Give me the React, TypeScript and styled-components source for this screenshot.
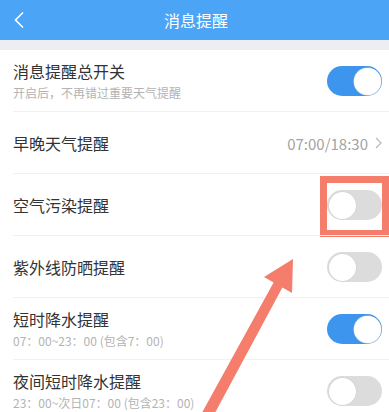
import { createGlobalStyle, styled } from "styled-components";

const Global = createGlobalStyle`
  body {
    margin: 0;
    background: #ffffff;
    font-family: "Noto Sans CJK SC", "Noto Sans", sans-serif;
  }
`;

const Page = styled.div`
  position: relative;
  width: 389px;
  height: 412px;
  overflow: hidden;
  background: #ffffff;
`;

const Header = styled.div`
  height: 40px;
  background: #4ba4f5;
  display: flex;
  align-items: center;
  justify-content: center;
  position: relative;
  color: #ffffff;
  font-size: 16px;
  padding-left: 3px;
`;

const Back = styled.svg`
  position: absolute;
  left: 13px;
  top: 11px;
`;

const Gap = styled.div`
  height: 10px;
  background: #eceef1;
`;

const Row = styled.div`
  height: 62px;
  display: flex;
  align-items: center;
  padding: 0 7px 0 13px;
  position: relative;
  &:not(:last-child)::after {
    content: "";
    position: absolute;
    left: 13px;
    right: 0;
    bottom: 0;
    height: 1px;
    background: #f1f1f1;
  }
`;

const Texts = styled.div`
  flex: 1;
  display: flex;
  flex-direction: column;
`;

const Title = styled.div`
  font-size: 16px;
  line-height: 21px;
  color: #333333;
`;

const Sub = styled.div`
  font-size: 12px;
  line-height: 16px;
  margin-top: 3px;
  color: #b3b3b3;
`;

const Value = styled.div`
  font-size: 15px;
  color: #a3a3a3;
  display: flex;
  align-items: center;
  gap: 7px;
`;

const ToggleWrap = styled.div`
  position: relative;
`;

const Toggle = styled.div<{ $on: boolean }>`
  width: 55px;
  height: 30px;
  border-radius: 15px;
  background: ${(p) => (p.$on ? "#3e95ee" : "#dcdcdc")};
  position: relative;
  &::after {
    content: "";
    position: absolute;
    top: 1.5px;
    left: ${(p) => (p.$on ? "26.5px" : "1.5px")};
    width: 27px;
    height: 27px;
    border-radius: 50%;
    background: #ffffff;
    box-shadow: 0 0 0 0.5px #d0d0d0;
  }
`;

const Highlight = styled.div`
  position: absolute;
  left: -7px;
  right: -7px;
  top: -14px;
  bottom: -17px;
  border: 7px solid #f47d6c;
  box-sizing: border-box;
  pointer-events: none;
`;

const Arrow = styled.svg`
  position: absolute;
  left: 0;
  top: 0;
  pointer-events: none;
`;

type Item = {
  title: string;
  sub?: string;
  on?: boolean;
  value?: string;
  mark?: boolean;
};

const items: Item[] = [
  { title: "消息提醒总开关", sub: "开启后，不再错过重要天气提醒", on: true },
  { title: "早晚天气提醒", value: "07:00/18:30" },
  { title: "空气污染提醒", on: false, mark: true },
  { title: "紫外线防晒提醒", on: false },
  { title: "短时降水提醒", sub: "07：00~23：00 (包含7：00)", on: true },
  { title: "夜间短时降水提醒", sub: "23：00~次日07：00 (包含23：00)", on: false },
];

export default function App() {
  return (
    <>
      <Global />
      <Page>
        <Header>
          <Back width="12" height="18" viewBox="0 0 12 18">
            <path d="M10 1.5 L2.5 9 L10 16.5" fill="none" stroke="#ffffff" strokeWidth="1.6" />
          </Back>
          消息提醒
        </Header>
        <Gap />
        {items.map((it) => (
          <Row key={it.title}>
            <Texts>
              <Title>{it.title}</Title>
              {it.sub && <Sub>{it.sub}</Sub>}
            </Texts>
            {it.value ? (
              <Value>
                {it.value}
                <svg width="7" height="12" viewBox="0 0 7 12">
                  <path d="M1 1 L6 6 L1 11" fill="none" stroke="#b8b8b8" strokeWidth="1.2" />
                </svg>
              </Value>
            ) : (
              <ToggleWrap>
                <Toggle $on={!!it.on} />
                {it.mark && <Highlight />}
              </ToggleWrap>
            )}
          </Row>
        ))}
        <Arrow width="389" height="412" viewBox="0 0 389 412">
          <polygon
            points="198,420 273.6,282.6 264,277 293,259 292,293 282.4,287.4 209,424"
            fill="#f47d6c"
          />
        </Arrow>
      </Page>
    </>
  );
}
